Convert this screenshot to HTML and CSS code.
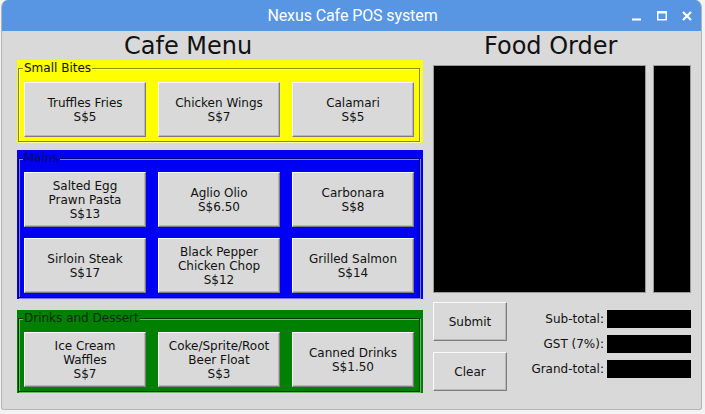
FILE: index.html
```html
<!DOCTYPE html>
<html>
<head>
<meta charset="utf-8">
<link rel="stylesheet" href="styles.css">
</head>
<body>
<div class="window">
  <div class="titlebar">
    <span class="title">Nexus Cafe POS system</span>
    <div class="winbtns">
      <svg class="wb" width="12" height="12" viewBox="0 0 12 12"><rect x="1" y="8.5" width="9" height="2" fill="#fff"/></svg>
      <svg class="wb" width="12" height="12" viewBox="0 0 12 12"><rect x="1.75" y="1.75" width="8.5" height="8" fill="none" stroke="#fff" stroke-width="1.5"/><rect x="1" y="1" width="10" height="2.5" fill="#fff"/></svg>
      <svg class="wb" width="12" height="12" viewBox="0 0 12 12"><path d="M2 2 L10 10 M10 2 L2 10" stroke="#fff" stroke-width="2.2"/></svg>
    </div>
  </div>
  <div class="content">
    <div class="menu">
      <h1 class="heading menu-heading">Cafe Menu</h1>
      <div class="frame yellow">
        <fieldset>
          <legend>Small Bites</legend>
          <div class="grid">
            <button class="item">Truffles Fries<br>S$5</button>
            <button class="item">Chicken Wings<br>S$7</button>
            <button class="item">Calamari<br>S$5</button>
          </div>
        </fieldset>
      </div>
      <div class="frame blue">
        <fieldset>
          <legend>Mains</legend>
          <div class="grid">
            <button class="item">Salted Egg<br>Prawn Pasta<br>S$13</button>
            <button class="item">Aglio Olio<br>S$6.50</button>
            <button class="item">Carbonara<br>S$8</button>
            <button class="item">Sirloin Steak<br>S$17</button>
            <button class="item">Black Pepper<br>Chicken Chop<br>S$12</button>
            <button class="item">Grilled Salmon<br>S$14</button>
          </div>
        </fieldset>
      </div>
      <div class="frame green">
        <fieldset>
          <legend>Drinks and Dessert</legend>
          <div class="grid">
            <button class="item">Ice Cream<br>Waffles<br>S$7</button>
            <button class="item">Coke/Sprite/Root<br>Beer Float<br>S$3</button>
            <button class="item">Canned Drinks<br>S$1.50</button>
          </div>
        </fieldset>
      </div>
    </div>
    <div class="order">
      <h1 class="heading order-heading">Food Order</h1>
      <div class="lists">
        <div class="listbox"></div>
        <div class="listbox side"></div>
      </div>
      <div class="bottom">
        <div class="actions">
          <button class="action">Submit</button>
          <button class="action">Clear</button>
        </div>
        <div class="totals">
          <span class="tlabel">Sub-total:</span><span class="entry"></span>
          <span class="tlabel">GST (7%):</span><span class="entry"></span>
          <span class="tlabel">Grand-total:</span><span class="entry"></span>
        </div>
      </div>
    </div>
  </div>
</div>
</body>
</html>
```
FILE: styles.css
```css
html, body {
  margin: 0;
  padding: 0;
  background: #f3f3f3;
}
body {
  width: 705px;
  height: 414px;
  overflow: hidden;
  font-family: "DejaVu Sans", sans-serif;
}
.window {
  margin-left: 1px;
  width: 701px;
  height: 410px;
  box-sizing: border-box;
  background: #d9d9d9;
  border: 1px solid #b4b4b4;
  border-top: none;
  border-radius: 7px 7px 3px 3px;
  overflow: hidden;
  display: flex;
  flex-direction: column;
}
.titlebar {
  height: 31px;
  flex: none;
  background: #5896e4;
  display: flex;
  align-items: center;
  justify-content: center;
  position: relative;
}
.title {
  font-family: Roboto, sans-serif;
  font-size: 16px;
  color: #fff;
  letter-spacing: -0.1px;
  margin-left: 2px;
}
.winbtns {
  position: absolute;
  right: 8px;
  top: 10px;
  display: flex;
  gap: 13px;
}
.wb { display: block; }
.content {
  flex: 1;
  display: flex;
  padding: 0 10px 0 15px;
  gap: 10px;
}
.menu {
  width: 406px;
  display: flex;
  flex-direction: column;
}
.heading {
  margin: 0;
  padding-top: 2px;
  height: 29px;
  box-sizing: border-box;
  font-weight: normal;
  font-size: 24px;
  line-height: 27px;
  color: #111;
  white-space: nowrap;
}
.menu-heading { padding-left: 107px; }
.order-heading { padding-left: 51px; }
.frame {
  padding: 1px 3px 1px 1px;
}
.frame.blue { margin-top: 7px; }
.frame.green { margin-top: 11px; }
.yellow { background: #ffff00; }
.blue { background: #0000f4; }
.green { background: #008000; }
fieldset {
  margin: 0;
  padding: 0;
  border: 1px solid;
  min-width: 0;
}
legend {
  margin-left: 4px;
  padding: 0 1px;
  font-size: 12px;
  line-height: 14px;
  color: #111;
}
.yellow fieldset { border-color: #8c8c00; box-shadow: 1px 1px 0 #ffffb0, inset 1px 1px 0 #ffffb0; }
.yellow legend { background: #ffff00; }
.blue fieldset { border-color: #000080; box-shadow: 1px 1px 0 #7c7cff, inset 1px 1px 0 #7c7cff; }
.blue legend { background: #0000f4; color: #0a0a66; }
.green fieldset { border-color: #003c00; box-shadow: 1px 1px 0 #70b870, inset 1px 1px 0 #70b870; }
.green legend { background: #008000; color: #0d2a0d; }
.grid {
  display: grid;
  grid-template-columns: repeat(3, 122px);
  grid-auto-rows: 55px;
  column-gap: 12px;
  row-gap: 11px;
  margin: 7px 0 4px 5px;
}
.item, .action {
  margin: 0;
  padding: 0;
  background: #d9d9d9;
  border-style: solid;
  border-width: 1px;
  border-color: #fafafa #7e7e7e #7e7e7e #fafafa;
  box-shadow: inset -1px -1px 0 #b8b8b8;
  font-family: "DejaVu Sans", sans-serif;
  font-size: 12px;
  line-height: 14px;
  color: #111;
  text-align: center;
}
.order {
  flex: 1;
  display: flex;
  flex-direction: column;
}
.lists {
  margin-top: 5px;
  height: 228px;
  display: flex;
  gap: 7px;
}
.listbox {
  width: 213px;
  box-sizing: border-box;
  background: #000;
  border: 1px solid #9a9a9a;
}
.listbox.side { width: 38px; }
.bottom {
  margin-top: 9px;
  display: flex;
}
.actions {
  display: flex;
  flex-direction: column;
  gap: 11px;
  width: 74px;
}
.action { height: 39px; }
.totals {
  flex: 1;
  padding-top: 8px;
  display: grid;
  grid-template-columns: 1fr 84px;
  grid-auto-rows: 18px;
  column-gap: 3px;
  row-gap: 7px;
  align-content: start;
}
.tlabel {
  text-align: right;
  font-size: 12px;
  line-height: 18px;
  color: #111;
}
.entry { background: #000; }
```
